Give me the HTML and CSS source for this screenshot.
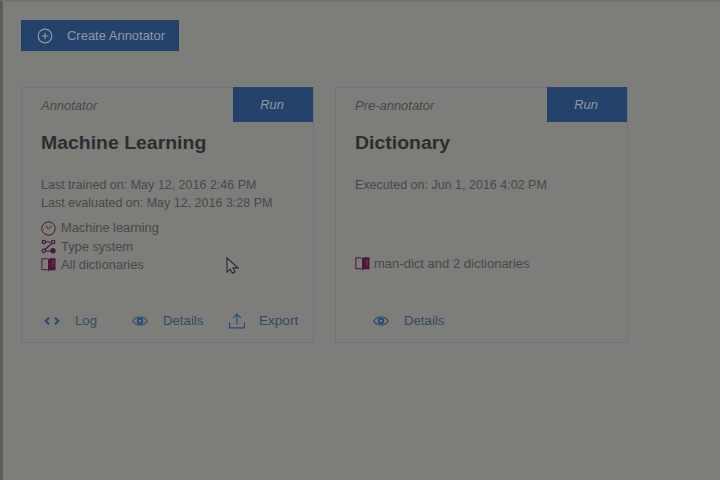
FILE: index.html
```html
<!DOCTYPE html>
<html lang="en">
<head>
<meta charset="utf-8">
<title>Annotators</title>
<link rel="stylesheet" href="styles.css">
</head>
<body>
<svg class="defs" width="0" height="0" aria-hidden="true">
  <symbol id="book" viewBox="0 0 15 15"><path d="M.8 1.8h5.4l1.3 1v10.8l-1.3-.9H.8z" fill="none" stroke="currentColor"/><path d="M7.3 2.6l1.4-1.3h5.8v12H8.7L7.3 14.5z" fill="currentColor"/><path d="M10.500 4.500h2.500M10.500 6.700h2.500M10.500 8.900h2.500" stroke="#79616d" stroke-width=".6"/></symbol>
  <symbol id="eye" viewBox="0 0 16 10"><path d="M.7 5C4.2-.4 11.8-.4 15.3 5 11.8 10.400 4.200 10.400.7 5z" fill="none" stroke="currentColor" stroke-width="1.100"/><circle cx="8" cy="5" r="2.300" fill="none" stroke="currentColor" stroke-width="1.900"/></symbol>
</svg>
<main class="page">
  <button class="create">
    <svg class="plus" viewBox="0 0 16 16"><circle cx="8" cy="8" r="6.800"/><path d="M8 4.700v6.600M4.700 8h6.600"/></svg>
    <span class="label">Create Annotator</span>
  </button>
  <div class="cards">
    <section class="card">
      <header class="head"><span class="kind label">Annotator</span><button class="run"><span>Run</span></button></header>
      <h2 class="label">Machine Learning</h2>
      <div class="dates"><p class="label">Last trained on: May 12, 2016 2:46 PM</p><p class="label">Last evaluated on: May 12, 2016 3:28 PM</p></div>
      <ul class="assets">
        <li><svg viewBox="0 0 15 15"><circle cx="7.500" cy="7.500" r="6.700" fill="none" stroke="currentColor"/><path d="M5 5l2.500 3 3.200-3.300" fill="none" stroke="currentColor"/></svg><span class="label">Machine learning</span></li>
        <li><svg viewBox="0 0 15 15"><g fill="none" stroke="currentColor" stroke-width="1.200"><path d="M4.500 3h6M11 4.300L4 10.500M4.500 12h6"/><circle cx="2.800" cy="3" r="1.700"/><circle cx="12.200" cy="3" r="1.700"/><circle cx="2.800" cy="11.800" r="1.700"/></g><circle cx="12" cy="11.700" r="2.700" fill="currentColor"/></svg><span class="label">Type system</span></li>
        <li><svg><use href="#book"/></svg><span class="label">All dictionaries</span></li>
      </ul>
      <footer class="actions">
        <a class="log"><svg viewBox="0 0 16 8"><path d="M5 .7L1.600 4 5 7.300M11 .7L14.400 4 11 7.300" fill="none" stroke="currentColor" stroke-width="2"/></svg><span class="label">Log</span></a>
        <a class="details"><svg><use href="#eye"/></svg><span class="label">Details</span></a>
        <a class="export"><svg viewBox="0 0 16 16"><path d="M.6 9.500v5.400h14.800V9.500M8 11.500V1M4.200 4.800L8 1l3.800 3.800" fill="none" stroke="currentColor" stroke-width="1.100"/></svg><span class="label">Export</span></a>
      </footer>
    </section>
    <section class="card second">
      <header class="head"><span class="kind label">Pre-annotator</span><button class="run"><span>Run</span></button></header>
      <h2 class="label">Dictionary</h2>
      <div class="dates"><p class="label">Executed on: Jun 1, 2016 4:02 PM</p></div>
      <ul class="assets"><li><svg><use href="#book"/></svg><span class="label">man-dict and 2 dictionaries</span></li></ul>
      <footer class="actions"><a class="details"><svg><use href="#eye"/></svg><span class="label">Details</span></a></footer>
    </section>
  </div>
</main>
<svg class="cursor" viewBox="0 0 13 18"><path d="M1 1v14l3.300-2.800 2 4 2.700-1.300-2-4H12z" fill="#858583" stroke="#29292e" stroke-width="1.100"/></svg>
</body>
</html>
```
FILE: styles.css
```css
* { box-sizing: border-box; }
body {
  margin: 0;
  height: 480px;
  overflow: hidden;
  background: #7d7d7a;
  color: #48484b;
  font: 12px/18px "Liberation Sans", Arial, sans-serif;
}
h2, p, ul { margin: 0; padding: 0; }
button { border: 0; padding: 0; font: inherit; }
.defs { position: absolute; }
.page {
  height: 480px;
  border-left: 3px solid #5b5b5e;
  border-top: 2px solid #727271;
  padding: 18px 0 0 18px;
}
.label {
  display: inline-block;
  white-space: nowrap;
  transform: scaleX(1.08);
  transform-origin: left center;
}
.create {
  display: flex;
  align-items: center;
  width: 158px;
  height: 31px;
  padding-left: 16px;
  gap: 14px;
  background: #25436a;
  color: #8d99a6;
}
.plus { width: 16px; height: 16px; fill: none; stroke: currentColor; stroke-width: 1.2; }
.cards { display: flex; gap: 21px; margin-top: 36px; }
.card {
  display: flex;
  flex-direction: column;
  width: 293px;
  height: 256px;
  border: 1px solid #72737a;
  padding-left: 19px;
}
.head { display: flex; justify-content: space-between; height: 34px; }
.kind { font-style: italic; line-height: 36px; }
.run {
  width: 80px;
  height: 35px;
  margin-top: -1px;
  background: #25436a;
  color: #8d99a6;
  font-style: italic;
}
.run span { display: inline-block; transform: translateX(-1px) scaleX(1.07); }
h2 { margin-top: 8px; font-size: 18px; line-height: 26px; color: #2d2d31; transform: scaleX(1.068); }
.dates { height: 37px; margin-top: 21px; }
.dates p { display: block; line-height: 17.5px; transform: scaleX(1.042); }
.assets { list-style: none; margin-top: 4px; height: 56px; display: flex; flex-direction: column; justify-content: flex-end; }
.assets li { display: flex; align-items: center; height: 18.3px; gap: 5px; }
.assets .label { transform: scaleX(1.07); }
.assets svg { width: 15px; height: 15px; color: #4d1738; }
.second .assets { height: 55px; }
.second .assets li { gap: 4px; }
.second .assets .label { transform: scaleX(1.085); }
.actions { display: flex; align-items: center; margin-top: 38px; height: 18px; color: #344967; }
.second .actions { margin-top: 39px; }
.actions a { display: flex; align-items: center; }
.actions svg { width: 16px; height: 10px; color: #244978; }
.actions .label { transform: scaleX(1.1); }
.log { width: 91px; padding-left: 3px; gap: 15px; }
.actions .log svg { height: 8px; }
.details { width: 97px; gap: 15px; }
.export { gap: 14px; }
.actions .export svg { height: 16px; }
.actions .export .label { transform: scaleX(1.13); }
.second .details { margin-left: 18px; }
.cursor { position: absolute; left: 226px; top: 257px; width: 13px; height: 18px; }
```
